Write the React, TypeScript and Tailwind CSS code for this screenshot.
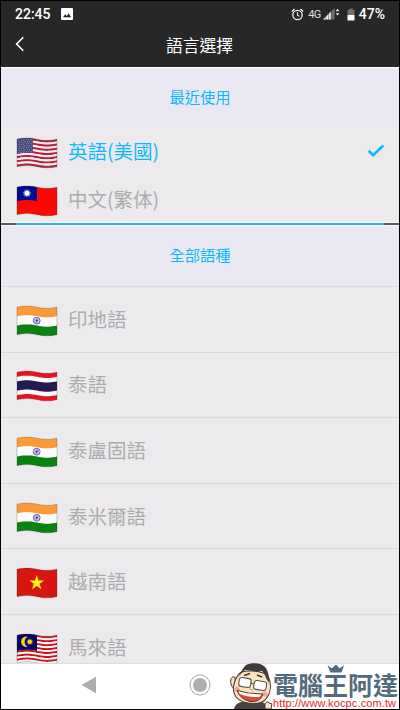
import type { ReactNode } from "react";

type FlagCode = "us" | "tw" | "in" | "th" | "vn" | "my";

type Language = {
  flag: FlagCode;
  name: string;
  selected?: boolean;
};

const recentLanguages: Language[] = [
  { flag: "us", name: "英語(美國)", selected: true },
  { flag: "tw", name: "中文(繁体)" },
];

const allLanguages: Language[] = [
  { flag: "in", name: "印地語" },
  { flag: "th", name: "泰語" },
  { flag: "in", name: "泰盧固語" },
  { flag: "in", name: "泰米爾語" },
  { flag: "vn", name: "越南語" },
  { flag: "my", name: "馬來語" },
];

const FLAG_W = 40;
const FLAG_H = 27.5;

// vertical offset of the waving cloth at x
const wave = (x: number) => 1.2 - 1.15 * Math.sin((2 * Math.PI * x) / FLAG_W);

/**
 * A horizontal band that follows the wave
 */
function Band({ y0, y1, x0 = 0, x1 = FLAG_W, fill }: { y0: number; y1: number; x0?: number; x1?: number; fill: string }) {
  const xs: number[] = [];
  for (let x = x0; x < x1; x += 2) xs.push(x);
  xs.push(x1);
  const top = xs.map((x) => `${x},${(wave(x) + y0).toFixed(2)}`);
  const bottom = [...xs].reverse().map((x) => `${x},${(wave(x) + y1).toFixed(2)}`);
  return <polygon points={[...top, ...bottom].join(" ")} fill={fill} />;
}

function Stripes({ count, colors }: { count: number; colors: string[] }) {
  const h = FLAG_H / count;
  return (
    <>
      {Array.from({ length: count }, (_, i) => (
        <Band key={i} y0={i * h} y1={(i + 1) * h} fill={colors[i % colors.length]} />
      ))}
    </>
  );
}

const flagArt: Record<FlagCode, ReactNode> = {
  us: (
    <>
      <Stripes count={13} colors={["#b2223a", "#f4eeee"]} />
      <Band y0={0} y1={14.8} x1={16} fill="#47477c" />
      {Array.from({ length: 7 }, (_, r) =>
        Array.from({ length: 6 }, (_, c) => (
          <circle
            key={`${r}-${c}`}
            cx={1.6 + c * 2.5 + (r % 2)}
            cy={wave(c * 2.5) + 1.5 + r * 2}
            r={0.5}
            fill="#b4b4d0"
          />
        ))
      )}
    </>
  ),
  tw: (
    <>
      <Band y0={0} y1={FLAG_H} fill="#fb0a05" />
      <Band y0={0} y1={14} x1={20} fill="#000b92" />
      <circle cx={10} cy={7.2} r={3.4} fill="none" stroke="#fff" strokeWidth={1.4} strokeDasharray="0.9 0.88" opacity={0.5} />
      <circle cx={10} cy={7.2} r={2.6} fill="#fff" />
    </>
  ),
  in: (
    <>
      <Stripes count={3} colors={["#fb9a37", "#fcfcfc", "#098211"]} />
      <circle cx={19.7} cy={14.7} r={3.4} fill="#e3e3f5" stroke="#5553ae" strokeWidth={0.9} />
      <circle cx={19.7} cy={14.7} r={1.9} fill="none" stroke="#8583c8" strokeWidth={1.6} strokeDasharray="0.6 0.6" />
      <circle cx={19.7} cy={14.7} r={1.1} fill="#2c2a96" />
    </>
  ),
  th: (
    <>
      <Band y0={0} y1={FLAG_H} fill="#e51420" />
      <Band y0={4.6} y1={22.9} fill="#fafafa" />
      <Band y0={9.2} y1={18.4} fill="#221c50" />
    </>
  ),
  vn: (
    <>
      <Band y0={0} y1={FLAG_H} fill="#d6160f" />
      <polygon
        points="19.7,7 21.5,12.5 27,12.5 22.6,15.8 24.3,21.2 19.7,17.9 15.1,21.2 16.8,15.8 12.4,12.5 17.9,12.5"
        fill="#fff30a"
      />
    </>
  ),
  my: (
    <>
      <Stripes count={14} colors={["#cf0e16", "#fafafa"]} />
      <Band y0={0} y1={15.7} x1={20} fill="#050563" />
      <path d="M10.8 2.7A5.3 5.3 0 1 0 10.8 12.9A5.7 5.7 0 0 1 10.8 2.7Z" fill="#ffd314" />
      <circle cx={12.8} cy={7.8} r={2.3} fill="#ffd314" />
      <circle cx={12.8} cy={7.8} r={2.8} fill="none" stroke="#ffd314" strokeWidth={0.8} strokeDasharray="0.6 0.65" />
    </>
  ),
};

function Flag({ code }: { code: FlagCode }) {
  const edge: string[] = [];
  for (let x = 0; x <= FLAG_W; x += 2) edge.push(`${x},${wave(x)}`);
  for (let x = FLAG_W; x >= 0; x -= 2) edge.push(`${x},${wave(x) + FLAG_H}`);
  return (
    <svg width="40" height="30" viewBox="0 0 40 30" className="shrink-0 overflow-visible">
      {flagArt[code]}
      <polygon points={edge.join(" ")} fill="none" stroke="#222" strokeOpacity={0.28} strokeWidth={0.8} />
    </svg>
  );
}

function StatusBar() {
  return (
    <div className="flex h-[26px] items-center justify-between pl-[14px] pr-[14px] font-['Roboto',sans-serif] text-white">
      <div className="flex items-center">
        <span className="w-[46px] text-[14px] font-medium leading-none">22:45</span>
        <svg width="12" height="12" viewBox="0 0 12 12">
          <rect width="12" height="12" rx="1" fill="#fff" />
          <path d="M2 9.3L4.2 6.3L5.7 8L7.7 5.4L10.2 9.3Z" fill="#272727" />
        </svg>
      </div>
      <div className="flex items-center">
        <svg width="13" height="13" viewBox="0 0 13 13" fill="none" stroke="#f2f2f2">
          <circle cx="6.5" cy="7" r="4.7" strokeWidth="1.3" />
          <path d="M6.5 4.3V7.2L8.5 8.4" strokeWidth="1.1" />
          <path d="M0.8 3.4L3.5 1.1M12.2 3.4L9.5 1.1" strokeWidth="1.3" />
        </svg>
        <span className="ml-1 w-[13px] text-[11px] leading-none tracking-[-0.7px] text-[#dedede]">4G</span>
        <svg width="17" height="12" viewBox="0 0 17 12" className="ml-[1.5px]">
          <path d="M0 11.5L11.5 0V11.5Z" fill="#707070" />
          <path d="M0 11.5L8 3.5V11.5Z" fill="#e8e8e8" />
          <path d="M2.8 8V12M5.5 5V12M8.2 2V12" stroke="#272727" strokeWidth="0.4" />
          <path d="M12.5 3.2L14.5 0.8L16.5 3.2ZM12.5 5.2L14.5 7.6L16.5 5.2Z" fill="#e8e8e8" />
        </svg>
        <svg width="8" height="13" viewBox="0 0 8 13" className="ml-[7px]">
          <path d="M2.3 0.5H5.7V1.7H7.5V7H0.5V1.7H2.3Z" fill="#707070" />
          <path d="M0.5 7H7.5V12.5H0.5Z" fill="#fff" />
        </svg>
        <span className="ml-1 text-[14px] font-medium leading-none">47%</span>
      </div>
    </div>
  );
}

function SectionHeader({ children }: { children: ReactNode }) {
  return <h2 className="text-center text-[15.3px] leading-6 text-[#0db8ff]">{children}</h2>;
}

function LanguageRow({ flag, name, selected = false }: Language) {
  return (
    <div className="flex w-full items-center pl-4 pr-[14px]">
      <Flag code={flag} />
      <span className={`-mt-[5px] ml-[11px] flex-1 text-[19.5px] leading-[25px] ${selected ? "text-[#0db8ff]" : "text-[#adacad]"}`}>
        {name}
      </span>
      {selected && (
        <svg width="18" height="14" viewBox="0 0 18 14" fill="none" stroke="#0db8ff" strokeWidth="2.6" className="-mt-[5px]">
          <path d="M1.6 6.8L6.2 11.3L16.3 1.5" />
        </svg>
      )}
    </div>
  );
}

function Mascot() {
  return (
    <svg width="44" height="47" viewBox="0 0 44 47">
      <path d="M4 47C5 42 9 40 15 39L31 40C35 41 37 43 38 47Z" fill="#4a4140" />
      <path d="M5 15C1 14 0 18 1 22C2 26 4 27 6 26Z" fill="#fbdfb9" stroke="#4c3b33" strokeWidth="1" />
      <path
        d="M8 13C11 7 32 8 38 14C42 22 41 31 35 38C29 44 12 42 6 35C1 28 4 19 8 13Z"
        fill="#fde4c0"
        stroke="#4c3b33"
        strokeWidth="1.1"
      />
      <path d="M8 15C10 11 13 6 16 3C22 0 32 1 35 5C38 8 39 13 39 21L36 16C35 12 34 11 32 9C25 10 19 8 15 8C12 10 11 12 8 15Z" fill="#403b3c" />
      <path d="M14 13.5L20 11.5M27 13L32 15" stroke="#403b3c" strokeWidth="1.7" />
      <circle cx="7" cy="27" r="2.6" fill="#f5a797" />
      <circle cx="35" cy="32" r="2.6" fill="#f5a797" />
      <rect x="9" y="16" width="12" height="9" rx="2.5" transform="rotate(9 15 20)" fill="#fff" stroke="#595251" strokeWidth="1.1" />
      <rect x="24" y="19" width="12.5" height="9" rx="2.5" transform="rotate(9 30 23)" fill="#fff" stroke="#595251" strokeWidth="1.1" />
      <path d="M20.5 21L24 22" stroke="#595251" strokeWidth="1.2" />
      <path d="M20 25Q19 28 23 28" fill="none" stroke="#b88970" strokeWidth="0.9" />
      <path d="M7 28.5Q18 32 33 32Q30 41 20 39.5Q10 37 7 28.5Z" fill="#d94c3b" stroke="#4c3b33" strokeWidth="1" />
      <path d="M8.3 29.3Q19 32.3 31.5 32.4L29.5 35Q18 35.5 9.5 31.7Z" fill="#fff" />
      <path d="M35 47V42Q37 38 39 41L42 42L41 47Z" fill="#fde4c0" stroke="#4c3b33" strokeWidth="1" />
    </svg>
  );
}

function Watermark() {
  return (
    <div className="absolute bottom-0 right-0 flex h-[47px] w-[169px]">
      <div className="w-[43px] shrink-0">
        <Mascot />
      </div>
      <div className="relative flex flex-1 flex-col pt-[8px]">
        <svg width="18" height="9" viewBox="0 0 18 9" className="absolute left-[54px] top-[2px]">
          <path d="M0.5 1.5L5 4.2L9 0.5L12.5 4.2L17 1.5L14.5 8.5H3.5Z" fill="#536b7c" />
        </svg>
        <div className="h-7 whitespace-nowrap text-[25px] font-bold leading-7 text-[#536b7c]">電腦王阿達</div>
        <div className="whitespace-nowrap font-['Liberation_Sans',Arial,sans-serif] text-[11px] leading-[10px] tracking-[0.12px] text-[#ee1c24]">
          http://www.kocpc.com.tw
        </div>
      </div>
    </div>
  );
}

function NavigationBar() {
  return (
    <div className="relative flex h-[46px] shrink-0 items-center border-t border-[#dcdcdc] bg-white pl-20">
      <svg width="16" height="18" viewBox="0 0 16 18" className="-mt-[3px]">
        <path d="M14.5 1.5V16.5L1.5 9Z" fill="#adadad" stroke="#adadad" strokeLinejoin="round" />
      </svg>
      <svg width="24" height="24" viewBox="0 0 24 24" className="-mt-[3px] ml-[91px]">
        <circle cx="12" cy="12" r="10" fill="none" stroke="#a8a8a8" strokeWidth="1" />
        <circle cx="12" cy="12" r="7" fill="#adadad" />
      </svg>
      <Watermark />
    </div>
  );
}

export default function App() {
  return (
    <div className="flex h-[710px] w-[400px] flex-col overflow-hidden border border-black bg-[#eceaed] font-['Noto_Sans_CJK_TC','Noto_Sans_CJK_SC',sans-serif]">
      <header className="h-[66px] shrink-0 bg-[#272727] text-white">
        <StatusBar />
        <div className="flex h-[37px] items-center">
          <svg width="10" height="16" viewBox="0 0 10 16" fill="none" stroke="#fff" strokeWidth="1.6" className="-mt-[3px] ml-[14px]">
            <path d="M8.3 1.2L1.6 8L8.3 14.8" />
          </svg>
          <h1 className="-mt-px flex-1 pr-[25px] text-center text-[16.8px] leading-6">語言選擇</h1>
        </div>
      </header>

      <section className="h-[155px] shrink-0">
        <div className="h-[59px] border-t border-white bg-[#eae8f3] pt-4">
          <SectionHeader>最近使用</SectionHeader>
        </div>
        <div className="flex flex-col gap-[18px] pt-3">
          {recentLanguages.map((language) => (
            <LanguageRow key={language.name} {...language} />
          ))}
        </div>
      </section>

      <div className="h-1 shrink-0 border-y border-[#f8f8f8] bg-[#605c60]">
        <div className="mx-[15px] h-0.5 bg-[#38b0e3]" />
      </div>

      <div className="h-[60px] shrink-0 bg-[#eae8f3] pt-4">
        <SectionHeader>全部語種</SectionHeader>
      </div>

      <ul className="min-h-0 flex-1 overflow-hidden">
        {allLanguages.map((language) => (
          <li key={language.name} className="flex h-[65.6px] items-center border-t border-[#dad8da] pt-[3px]">
            <LanguageRow {...language} />
          </li>
        ))}
      </ul>

      <NavigationBar />
    </div>
  );
}
